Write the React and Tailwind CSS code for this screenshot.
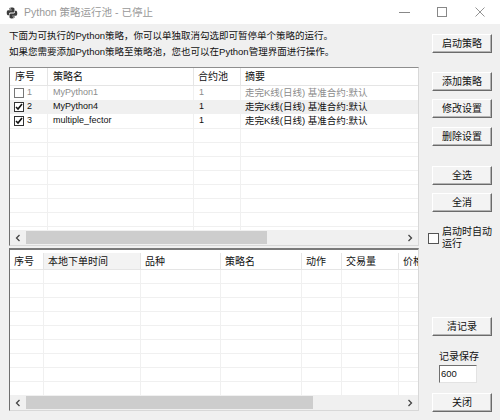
const strategies = [
  { id: 1, name: 'MyPython1', pool: '1', desc: '走完K线(日线) 基准合约:默认', checked: false },
  { id: 2, name: 'MyPython4', pool: '1', desc: '走完K线(日线) 基准合约:默认', checked: true },
  { id: 3, name: 'multiple_fector', pool: '1', desc: '走完K线(日线) 基准合约:默认', checked: true },
];

const logCols = [
  { label: '序号', w: 'w-[34px]' },
  { label: '本地下单时间', w: 'w-[97px]' },
  { label: '品种', w: 'w-[80px]' },
  { label: '策略名', w: 'w-[81px]' },
  { label: '动作', w: 'w-[40px]' },
  { label: '交易量', w: 'w-[57px]' },
  { label: '价格', w: 'w-[40px]' },
];

function PyIcon() {
  return (
    <svg width="12" height="12" viewBox="0 0 24 24">
      <path d="M11.8 1C6.5 1 6.8 3.3 6.8 3.3V5.7h5.1v.8H4.8S1.4 6.1 1.4 11.5s3 5.2 3 5.2h1.8v-2.5s-.1-3 2.9-3h5.1s2.8 0 2.8-2.7V3.9S17.4 1 11.8 1zM9 2.6a.9.9 0 1 1 0 1.8.9.9 0 0 1 0-1.8z" fill="#3c3c3c" />
      <path d="M12.2 23c5.3 0 5-2.3 5-2.3v-2.4h-5.1v-.8h7.1s3.4.4 3.4-5-3-5.2-3-5.2h-1.8v2.5s.1 3-2.9 3H9.8S7 12.8 7 15.5v4.6S6.6 23 12.2 23zm2.8-1.6a.9.9 0 1 1 0-1.8.9.9 0 0 1 0 1.8z" fill="#3c3c3c" />
    </svg>
  );
}

function Check({ on }) {
  return (
    <span className={`w-[10px] h-[10px] border flex items-center justify-center bg-white ${on ? 'border-[#333]' : 'border-[#777]'}`}>
      {on && (
        <svg width="8" height="8" viewBox="0 0 8 8">
          <path d="M1 4l2 2 4-5" stroke="#111" strokeWidth="1.6" fill="none" />
        </svg>
      )}
    </span>
  );
}

function Btn({ children, className = '' }) {
  return (
    <button className={`ml-[4px] w-[60px] h-[19px] bg-[#f3f3f3] border-t border-l border-t-white border-l-white border-r border-b border-r-[#6b6b6b] border-b-[#6b6b6b] shadow-[inset_-1px_-1px_0_#b4b4b4] text-[10px] leading-none text-[#111] flex items-center justify-center ${className}`}>
      {children}
    </button>
  );
}

function ScrollBar({ thumb }) {
  return (
    <div className="h-[15px] flex items-stretch bg-[#f0f0f0] shrink-0">
      <div className="w-[16px] flex items-center justify-center">
        <svg width="6" height="8" viewBox="0 0 6 8"><path d="M4.5 1L1.5 4l3 3" stroke="#444" strokeWidth="1.3" fill="none" /></svg>
      </div>
      <div className="flex-1 py-[1px]">
        <div className={`h-full bg-[#cdcdcd] ${thumb}`} />
      </div>
      <div className="w-[16px] flex items-center justify-center">
        <svg width="6" height="8" viewBox="0 0 6 8"><path d="M1.5 1l3 3-3 3" stroke="#444" strokeWidth="1.3" fill="none" /></svg>
      </div>
    </div>
  );
}

export default function App() {
  const topEmpty = Array.from({ length: 8 });
  const logEmpty = Array.from({ length: 10 });

  return (
    <div className="w-[500px] h-[420px] bg-[#f0f0f0] flex flex-col overflow-hidden font-['Liberation_Sans','Noto_Sans_CJK_SC',sans-serif] text-[9px] text-[#111]">
      {/* title bar */}
      <div className="h-[24px] bg-white flex items-center shrink-0">
        <div className="ml-[6px] mt-[2px]"><PyIcon /></div>
        <span className="ml-[6px] mt-[2px] text-[10.5px] text-[#999]">Python 策略运行池 - 已停止</span>
        <div className="ml-auto flex items-center h-full">
          <div className="w-[37px] flex justify-center"><div className="w-[11px] h-px bg-[#888]" /></div>
          <div className="w-[37px] flex justify-center"><div className="w-[10px] h-[10px] border border-[#888]" /></div>
          <div className="w-[40px] flex justify-center">
            <svg width="10" height="10" viewBox="0 0 10 10"><path d="M.5.5l9 9M9.5.5l-9 9" stroke="#888" strokeWidth="0.9" /></svg>
          </div>
        </div>
      </div>

      <div className="flex flex-1">
        {/* left column */}
        <div className="ml-[9px] w-[410px] flex flex-col">
          <div className="pt-[4px] leading-[16px] text-[9.5px]">
            <div>下面为可执行的Python策略，你可以单独取消勾选即可暂停单个策略的运行。</div>
            <div>如果您需要添加Python策略至策略池，您也可以在Python管理界面进行操作。</div>
          </div>

          {/* strategy table */}
          <div className="mt-[7px] h-[179px] flex flex-col bg-white border-t border-l border-t-[#8e8e8e] border-l-[#6f6f6f] border-r border-b border-r-[#d8d8d8] border-b-[#d8d8d8] overflow-hidden">
            <div className="h-[18px] flex shrink-0 border-b border-[#e5e5e5] text-[10px]">
              <div className="w-[38px] pl-[5px] flex items-center border-r border-[#e5e5e5]">序号</div>
              <div className="w-[146px] pl-[5px] flex items-center border-r border-[#e5e5e5]">策略名</div>
              <div className="w-[47px] pl-[4px] flex items-center border-r border-[#e5e5e5]">合约池</div>
              <div className="flex-1 pl-[4px] flex items-center">摘要</div>
            </div>
            <div className="flex-1 overflow-hidden">
              {strategies.map((s, i) => (
                <div key={s.id} className={`h-[14px] flex ${i === 1 ? 'bg-[#f0f0f0]' : ''} ${s.checked ? 'text-[#111]' : 'text-[#8c8c8c]'}`}>
                  <div className="w-[38px] pl-[4px] flex items-center gap-[3px] border-r border-[#f0f0f0]">
                    <Check on={s.checked} />
                    <span>{s.id}</span>
                  </div>
                  <div className="w-[146px] pl-[5px] flex items-center border-r border-[#f0f0f0]">{s.name}</div>
                  <div className="w-[47px] pl-[5px] flex items-center border-r border-[#f0f0f0]">{s.pool}</div>
                  <div className="flex-1 pl-[4px] flex items-center text-[9.5px]">{s.desc}</div>
                </div>
              ))}
              {topEmpty.map((_, i) => (
                <div key={i} className="h-[14px] flex border-t border-[#f0f0f0]">
                  <div className="w-[38px] border-r border-[#f0f0f0]" />
                  <div className="w-[146px] border-r border-[#f0f0f0]" />
                  <div className="w-[47px] border-r border-[#f0f0f0]" />
                  <div className="flex-1" />
                </div>
              ))}
            </div>
            <ScrollBar thumb="w-[241px]" />
          </div>

          {/* log table */}
          <div className="mt-[2px] h-[163px] flex flex-col bg-white border-t-2 border-l border-t-[#7a7a7a] border-l-[#6f6f6f] border-r border-b border-r-[#d8d8d8] border-b-[#d8d8d8] overflow-hidden">
            <div className="h-[3px] shrink-0" />
            <div className="h-[17px] flex shrink-0 border-b border-[#e5e5e5] text-[10px]">
              {logCols.map((c, i) => (
                <div key={c.label} className={`${c.w} shrink-0 pl-[4px] flex items-center whitespace-nowrap border-r border-[#e5e5e5] ${i === 1 ? 'bg-[#f3f3f3]' : ''}`}>{c.label}</div>
              ))}
            </div>
            <div className="flex-1 overflow-hidden">
              {logEmpty.map((_, i) => (
                <div key={i} className="h-[14px] flex border-b border-[#f0f0f0]">
                  {logCols.map(c => (
                    <div key={c.label} className={`${c.w} shrink-0 border-r border-[#f0f0f0]`} />
                  ))}
                </div>
              ))}
            </div>
            <ScrollBar thumb="w-[287px]" />
          </div>
        </div>

        {/* right column */}
        <div className="ml-[9px] w-[70px] flex flex-col">
          <Btn className="mt-[10px]">启动策略</Btn>
          <Btn className="mt-[19px]">添加策略</Btn>
          <Btn className="mt-[8px]">修改设置</Btn>
          <Btn className="mt-[9px]">删除设置</Btn>
          <Btn className="mt-[20px]">全选</Btn>
          <Btn className="mt-[8px]">全消</Btn>
          <div className="mt-[14px] h-[24px] flex items-start">
            <span className="mt-[7px] w-[11px] h-[11px] border border-[#555] bg-white shrink-0" />
            <span className="ml-[3px] text-[10px] leading-[12px] whitespace-nowrap">启动时自动<br />运行</span>
          </div>
          <Btn className="mt-[67px]">清记录</Btn>
          <div className="mt-[14px] ml-[11px] h-[14px] text-[10px] leading-[14px]">记录保存</div>
          <div className="mt-[1px] ml-[11px] w-[38px] h-[18px] bg-white border-t border-l border-t-[#6f6f6f] border-l-[#6f6f6f] border-r border-b border-r-[#e3e3e3] border-b-[#e3e3e3] text-[9.5px] pl-[1px] flex items-center">600</div>
          <Btn className="mt-[10px]">关闭</Btn>
        </div>
      </div>
    </div>
  );
}
